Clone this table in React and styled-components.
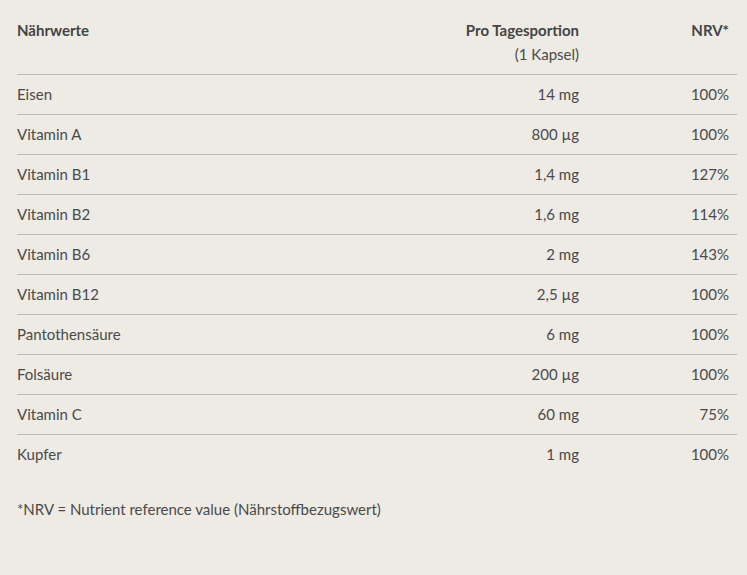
import styled, { createGlobalStyle } from 'styled-components';

const rows = [
  ['Eisen', '14 mg', '100%'],
  ['Vitamin A', '800 µg', '100%'],
  ['Vitamin B1', '1,4 mg', '127%'],
  ['Vitamin B2', '1,6 mg', '114%'],
  ['Vitamin B6', '2 mg', '143%'],
  ['Vitamin B12', '2,5 µg', '100%'],
  ['Pantothensäure', '6 mg', '100%'],
  ['Folsäure', '200 µg', '100%'],
  ['Vitamin C', '60 mg', '75%'],
  ['Kupfer', '1 mg', '100%'],
];

function App() {
  return (
    <>
      <GlobalStyle />
      <Page>
        <Table>
          <HeadRow>
            <Cell>Nährwerte</Cell>
            <Cell $align="right">
              Pro Tagesportion
              <Sub>(1 Kapsel)</Sub>
            </Cell>
            <Cell $align="right">NRV*</Cell>
          </HeadRow>
          {rows.map(([name, amount, nrv]) => (
            <Row key={name}>
              <Cell>{name}</Cell>
              <Cell $align="right">{amount}</Cell>
              <Cell $align="right">{nrv}</Cell>
            </Row>
          ))}
        </Table>
        <Note>*NRV = Nutrient reference value (Nährstoffbezugswert)</Note>
      </Page>
    </>
  );
}

const GlobalStyle = createGlobalStyle`
  html, body {
    margin: 0;
    background: #eeebe5;
  }
  body {
    font-family: Lato, "Liberation Sans", sans-serif;
    font-size: 15px;
    line-height: 24px;
    color: #4a4a4a;
  }
`;

const Page = styled.div`
  padding: 11px 10px 40px 17px;
  min-height: 575px;
  box-sizing: border-box;
`;

const Table = styled.div`
  display: flex;
  flex-direction: column;
`;

const Row = styled.div`
  display: grid;
  grid-template-columns: 1fr 220px 150px;
  border-bottom: 1px solid #bdbab5;

  &:last-child {
    border-bottom: none;
  }
`;

const HeadRow = styled(Row)`
  font-weight: 700;
  color: #444;
`;

const Cell = styled.div`
  padding: 7px 8px 8px 0;
  text-align: ${(p) => p.$align || 'left'};
`;

const Sub = styled.div`
  font-weight: 400;
  color: #4a4a4a;
`;

const Note = styled.p`
  margin: 23px 0 0;
`;

export default App;
